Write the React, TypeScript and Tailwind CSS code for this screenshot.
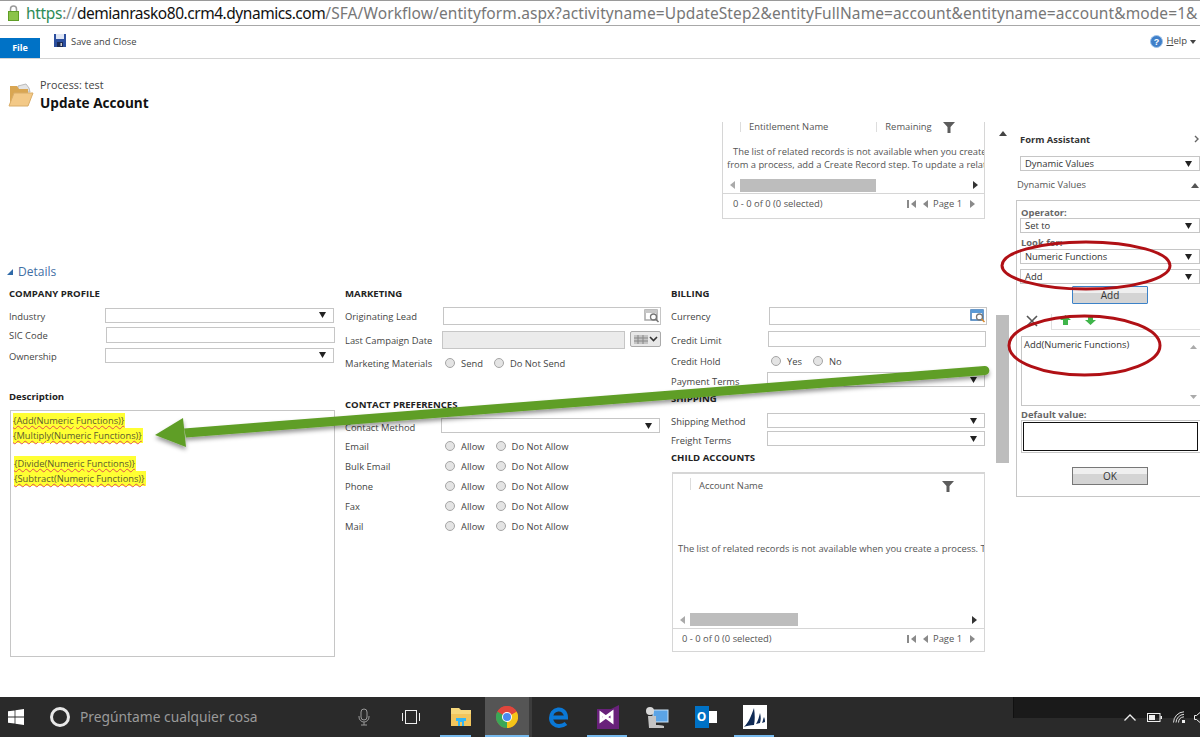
import type { ReactNode } from 'react'
import clsx from 'clsx'

const Caret = () => (
  <svg width="7" height="6" viewBox="0 0 7 6" className="shrink-0"><path d="M0 0h7L3.5 6z" fill="#222" /></svg>
)

const Select = ({ value, className }: { value?: string; className?: string }) => (
  <div className={clsx('flex items-center justify-between border border-[#c6c6c6] bg-white pl-[4px] pr-[7px] text-[#333]', className)}>
    <span className="mt-[2px]">{value}</span>
    <Caret />
  </div>
)

const Lookup = ({ accent }: { accent?: boolean }) => (
  <svg width="16" height="14" viewBox="0 0 16 14" className="shrink-0">
    <rect x="1" y="1" width="12" height="10" fill="#fff" stroke={accent ? '#3a78b8' : '#a8a8a8'} strokeWidth="1.5" />
    <rect x="1" y="1" width="12" height="3" fill={accent ? '#5a9ad6' : '#c8c8c8'} />
    <circle cx="9.5" cy="8" r="3" fill="none" stroke="#777" strokeWidth="1.3" />
    <path d="M11.5 10l3 3" stroke={accent ? '#d98a30' : '#777'} strokeWidth="1.6" />
  </svg>
)

const Radio = () => (
  <span className="block h-[10px] w-[10px] shrink-0 rounded-full border border-[#a5a5a5] bg-[#e4e4e4]" />
)

const RadioPair = ({ a, b, gap }: { a: string; b: string; gap: string }) => (
  <div className="flex items-center">
    <Radio />
    <span className={clsx('ml-[6px] pt-[2px] text-[#444]', gap)}>{a}</span>
    <Radio />
    <span className="ml-[6px] pt-[2px] text-[#444]">{b}</span>
  </div>
)

const Field = ({ label, labelClass, className, children }: { label: string; labelClass: string; className?: string; children?: ReactNode }) => (
  <div className={clsx('flex items-center', className)}>
    <span className={clsx('shrink-0 pt-[2px] whitespace-nowrap text-[#444]', labelClass)}>{label}</span>
    {children}
  </div>
)

const SectionTitle = ({ children, className }: { children: ReactNode; className?: string }) => (
  <div className={clsx('h-[14px] whitespace-nowrap text-[9.6px] leading-[16px] font-bold text-[#222]', className)}>{children}</div>
)

const Funnel = () => (
  <svg width="12" height="11" viewBox="0 0 12 11"><path d="M0 0h12L7.5 5v6h-3V5z" fill="#5c5c5c" /></svg>
)

const Tri = ({ dir }: { dir: 'l' | 'r' }) => (
  <svg width="5" height="8" viewBox="0 0 5 8"><path d={dir === 'l' ? 'M5 0v8L0 4z' : 'M0 0v8l5-4z'} fill={dir === 'l' ? '#aaa' : '#333'} /></svg>
)

const Pager = () => (
  <div className="flex items-center text-[#555]">
    <span className="mr-[2px] h-[8px] w-[2px] bg-[#8a8a8a]" />
    <svg width="5" height="8" viewBox="0 0 5 8" className="mr-[7px]"><path d="M5 0v8L0 4z" fill="#8a8a8a" /></svg>
    <svg width="5" height="8" viewBox="0 0 5 8" className="mr-[5px]"><path d="M5 0v8L0 4z" fill="#8a8a8a" /></svg>
    <span>Page 1</span>
    <svg width="5" height="8" viewBox="0 0 5 8" className="ml-[8px]"><path d="M0 0v8l5-4z" fill="#8a8a8a" /></svg>
  </div>
)

const Squiggle = ({ children }: { children: ReactNode }) => (
  <span className="underline decoration-[#e05050] decoration-wavy decoration-1">{children}</span>
)

const HighlightLine = ({ name, className }: { name: string; className?: string }) => (
  <div className={clsx('h-[15px] w-fit bg-[#ffff33] pr-[1px] text-[9.3px] leading-[15px] whitespace-nowrap text-[#5a5a30]', className)}>
    <Squiggle>{`{${name}(Numeric`}</Squiggle> <Squiggle>{'Functions)}'}</Squiggle>
  </div>
)

const Btn = ({ label, className }: { label: string; className?: string }) => (
  <div className={clsx('flex items-center justify-center bg-[linear-gradient(#efefef_0%,#efefef_40%,#d4d4d4_40%,#d4d4d4_100%)] text-[10px] text-[#333]', className)}>{label}</div>
)

const Windows = () => (
  <svg width="16" height="16" viewBox="0 0 16 16"><path d="M0 2.3l6.6-.9v6.2H0zM7.4 1.3L16 0v7.6H7.4zM0 8.4h6.6v6.2L0 13.7zM7.4 8.4H16V16l-8.6-1.2z" fill="#fff" /></svg>
)

const TaskSlot = ({ children, line, active }: { children: ReactNode; line?: string; active?: boolean }) => (
  <div className="relative flex h-full w-[49px] items-center justify-center">
    {active && <div className="absolute inset-y-0 left-0 w-[44px] bg-[#555]" />}
    {active && <div className="absolute inset-y-0 left-[44px] w-[3px] bg-[#3c3c3c]" />}
    <div className="relative">{children}</div>
    {line && <div className={clsx('absolute bottom-0 h-[2px] bg-[#76b9ed]', line)} />}
  </div>
)

export default function App() {
  return (
    <div className="relative h-[737px] w-[1200px] overflow-hidden bg-white font-['Open_Sans',sans-serif] text-[9.4px]">
      {/* address bar */}
      <div className="flex h-[26px] items-center overflow-hidden border-t border-b border-t-[#9a9a9a] border-b-[#a8a8a8] pl-[8px]">
        <svg width="11" height="16" viewBox="0 0 11 16" className="shrink-0">
          <path d="M2.5 7V4a3 3 0 0 1 6 0v3" fill="none" stroke="#9a9a9a" strokeWidth="1.5" />
          <rect x="0.5" y="6.5" width="10" height="9" fill="#8bc34a" stroke="#5f9e26" />
        </svg>
        <div className="ml-[7px] text-[15.5px] leading-[24px] whitespace-nowrap font-['Noto_Sans',sans-serif]">
          <span className="tracking-[-0.32px] text-[#2e8b57]">https</span>
          <span className="tracking-[-0.32px] text-[#888]">://</span>
          <span className="tracking-[-0.46px] text-[#111]">demianrasko80.crm4.dynamics.com</span>
          <span className="tracking-[0.1px] text-[#777]">/SFA/Workflow/entityform.aspx?activityname=UpdateStep2&amp;entityFullName=account&amp;entityname=account&amp;mode=1&amp;</span>
        </div>
      </div>

      {/* ribbon */}
      <div className="flex h-[33px] items-stretch border-b border-[#d4d4d4]">
        <div className="mt-[12px] flex w-[40px] items-center justify-center bg-[#0072c6] text-[9px] font-bold text-white">File</div>
        <div className="mt-[8px] ml-[14px] flex h-[13px] items-start">
          <svg width="12" height="13" viewBox="0 0 12 13">
            <rect width="12" height="13" fill="#2c4f9e" />
            <rect x="2" y="0" width="8" height="5" fill="#dfe6f4" />
            <rect x="3" y="8" width="6" height="5" fill="#1c2c55" />
            <rect x="6.5" y="9" width="1.5" height="3" fill="#ccc" />
          </svg>
          <span className="mt-[1px] ml-[5px] text-[9.4px] leading-[14px] whitespace-nowrap text-[#444]">Save and Close</span>
        </div>
        <div className="mt-[9px] mr-[4px] ml-auto flex h-[13px] items-center">
          <svg width="13" height="13" viewBox="0 0 13 13">
            <circle cx="6.5" cy="6.5" r="6" fill="#3f7fc9" stroke="#9cc2ea" />
            <text x="6.5" y="10" textAnchor="middle" fontSize="9" fontWeight="700" fill="#fff" fontFamily="Liberation Sans">?</text>
          </svg>
          <span className="ml-[3px] text-[9.5px] text-[#444]"><span className="underline">H</span>elp</span>
          <svg width="6" height="4" viewBox="0 0 6 4" className="ml-[3px]"><path d="M0 0h6L3 4z" fill="#444" /></svg>
        </div>
      </div>

      <div className="flex h-[638px]">
        {/* form area */}
        <div className="w-[996px] shrink-0">
          <div className="flex h-[63px] pt-[24px] pl-[8px]">
            <svg width="26" height="25" viewBox="0 0 26 25" className="shrink-0">
              <path d="M10 3l8-2 3 4 1 4H10z" fill="#e4e4e4" stroke="#bbb" />
              <path d="M2 3h7l2 3h9v16H2z" fill="#d9a652" />
              <path d="M6 10h19l-5 13H1z" fill="#f3c987" stroke="#d9ad68" />
            </svg>
            <div className="-mt-[7px] ml-[6px]">
              <div className="h-[17px] text-[10.8px] leading-[17px] text-[#444]">Process: test</div>
              <div className="h-[19px] text-[13.6px] leading-[19px] font-bold whitespace-nowrap text-[#111]">Update Account</div>
            </div>
          </div>

          <div className="ml-[722px] flex h-[97px] w-[263px] flex-col overflow-hidden border-x border-b border-[#d6d6d6]">
            <div className="relative flex h-[11px] items-end text-[#555]">
              <div className="absolute top-0 left-[17px] h-[10px] w-px bg-[#ddd]" />
              <span className="ml-[26px] leading-[12px] whitespace-nowrap">Entitlement Name</span>
              <div className="absolute top-0 left-[153px] h-[10px] w-px bg-[#ddd]" />
              <span className="ml-[57px] leading-[12px]">Remaining</span>
              <div className="ml-[11px]"><Funnel /></div>
            </div>
            <div className="mt-[12px] h-[13px] pl-[10px] leading-[13px] whitespace-nowrap text-[#555]">The list of related records is not available when you create a process.</div>
            <div className="h-[13px] pl-[4px] leading-[13px] whitespace-nowrap text-[#555]">from a process, add a Create Record step. To update a related record</div>
            <div className="mt-[7px] flex h-[14px] items-center">
              <div className="ml-[7px]"><Tri dir="l" /></div>
              <div className="ml-[5px] h-[13px] w-[136px] bg-[#bdbdbd]" />
              <div className="mr-[6px] ml-auto"><Tri dir="r" /></div>
            </div>
            <div className="mt-px flex flex-1 items-center justify-between border-t border-[#d6d6d6] pr-[9px] pb-[4px] pl-[10px] text-[#555]">
              <span>0 - 0 of 0 (0 selected)</span>
              <Pager />
            </div>
          </div>

          <div className="flex h-[67px] items-end pb-[6px] pl-[7px]">
            <svg width="6" height="6" viewBox="0 0 6 6" className="mb-[5px]"><path d="M6 0v6H0z" fill="#2f6aa8" /></svg>
            <span className="ml-[5px] text-[12px] leading-[16px] text-[#3f6fa5]">Details</span>
          </div>

          <div className="flex gap-[10px] pl-[9px]">
            {/* company profile */}
            <div className="w-[326px] shrink-0">
              <SectionTitle>COMPANY PROFILE</SectionTitle>
              <Field label="Industry" labelClass="mt-[2px] w-[96px]" className="mt-[7px] h-[16px]"><Select className="h-[15px] w-[229px]" /></Field>
              <Field label="SIC Code" labelClass="mt-[2px] w-[97px]" className="mt-[3px] h-[17px]"><div className="h-[16px] w-[229px] border border-[#c6c6c6]" /></Field>
              <Field label="Ownership" labelClass="mt-[2px] w-[96px]" className="mt-[4px] h-[16px]"><Select className="h-[15px] w-[229px]" /></Field>
              <SectionTitle className="mt-[26px]">Description</SectionTitle>
              <div className="mt-[7px] ml-px h-[247px] w-[325px] border border-[#c6c6c6] pt-[2px] pl-[2px]">
                <HighlightLine name="Add" />
                <HighlightLine name="Multiply" />
                <div className="h-[13px]" />
                <HighlightLine name="Divide" className="ml-px" />
                <HighlightLine name="Subtract" className="ml-px" />
              </div>
            </div>

            {/* marketing + contact */}
            <div className="w-[316px] shrink-0">
              <SectionTitle>MARKETING</SectionTitle>
              <Field label="Originating Lead" labelClass="w-[98px]" className="mt-[7px] h-[18px]">
                <div className="flex h-[18px] w-[218px] items-center justify-end border border-[#c6c6c6]"><Lookup /></div>
              </Field>
              <Field label="Last Campaign Date" labelClass="w-[97px]" className="mt-[6px] h-[18px]">
                <div className="h-[18px] w-[183px] border border-[#c6c6c6] bg-[#ebebeb]" />
                <div className="ml-[5px] flex h-[16px] w-[31px] items-center justify-center self-start rounded-[2px] border border-[#aaa] bg-[#e8e8e8]">
                  <svg width="14" height="9" viewBox="0 0 14 9"><rect width="14" height="9" fill="#c4c4c4" /><path d="M0 3h14M0 6h14M4 0v9M9 0v9" stroke="#888" /></svg>
                  <svg width="9" height="6" viewBox="0 0 9 6" className="ml-px"><path d="M1 1l3.5 3.5L8 1" fill="none" stroke="#333" strokeWidth="1.6" /></svg>
                </div>
              </Field>
              <Field label="Marketing Materials" labelClass="w-[100px]" className="mt-[6px] h-[16px]">
                <RadioPair a="Send" b="Do Not Send" gap="mr-[11px]" />
              </Field>
              <SectionTitle className="mt-[26px]">CONTACT PREFERENCES</SectionTitle>
              <Field label="Contact Method" labelClass="mt-[3px] w-[96px]" className="mt-[7px] h-[15px]"><Select className="h-[15px] w-[219px]" /></Field>
              {['Email', 'Bulk Email', 'Phone', 'Fax', 'Mail'].map((name, i) => (
                <Field key={name} label={name} labelClass="w-[100px]" className={i === 0 ? 'mt-[5px] h-[16px]' : 'mt-[4px] h-[16px]'}>
                  <RadioPair a="Allow" b="Do Not Allow" gap="mr-[11px]" />
                </Field>
              ))}
            </div>

            {/* billing + shipping + child accounts */}
            <div className="w-[316px] shrink-0">
              <SectionTitle>BILLING</SectionTitle>
              <Field label="Currency" labelClass="w-[98px]" className="mt-[7px] h-[18px]">
                <div className="flex h-[18px] w-[218px] items-center justify-end border border-[#c6c6c6]"><Lookup accent /></div>
              </Field>
              <Field label="Credit Limit" labelClass="mt-[2px] w-[97px]" className="mt-[6px] h-[16px]"><div className="h-[16px] w-[218px] border border-[#c6c6c6]" /></Field>
              <Field label="Credit Hold" labelClass="w-[100px]" className="mt-[6px] h-[16px]">
                <RadioPair a="Yes" b="No" gap="mr-[11px]" />
              </Field>
              <Field label="Payment Terms" labelClass="mt-[3px] w-[96px]" className="mt-[3px] h-[15px]"><Select className="h-[15px] w-[218px]" /></Field>
              <SectionTitle className="mt-[4px]">SHIPPING</SectionTitle>
              <Field label="Shipping Method" labelClass="mt-[2px] w-[96px]" className="mt-[8px] h-[15px]"><Select className="h-[15px] w-[218px]" /></Field>
              <Field label="Freight Terms" labelClass="mt-[3px] w-[96px]" className="mt-[3px] h-[15px]"><Select className="h-[15px] w-[218px]" /></Field>
              <SectionTitle className="mt-[4px]">CHILD ACCOUNTS</SectionTitle>
              <div className="mt-[8px] ml-px flex h-[180px] w-[313px] flex-col overflow-hidden border border-[#d6d6d6]">
                <div className="relative flex h-[25px] items-center border-t border-[#d6d6d6] text-[#555]">
                  <div className="absolute top-[4px] left-[17px] h-[12px] w-px bg-[#ddd]" />
                  <span className="ml-[26px]">Account Name</span>
                  <div className="mr-[30px] ml-auto"><Funnel /></div>
                </div>
                <div className="flex flex-1 items-center pb-[12px] pl-[5px] whitespace-nowrap text-[#555]">The list of related records is not available when you create a process. To add</div>
                <div className="flex h-[15px] items-center">
                  <div className="ml-[7px]"><Tri dir="l" /></div>
                  <div className="ml-[5px] h-[13px] w-[108px] bg-[#bdbdbd]" />
                  <div className="mr-[7px] ml-auto"><Tri dir="r" /></div>
                </div>
                <div className="mt-px flex h-[23px] items-center justify-between border-t border-[#d6d6d6] pr-[9px] pb-[2px] pl-[9px] text-[#555]">
                  <span>0 - 0 of 0 (0 selected)</span>
                  <Pager />
                </div>
              </div>
            </div>
          </div>
        </div>

        {/* form scrollbar */}
        <div className="w-[13px] shrink-0 pt-[72px]">
          <svg width="8" height="5" viewBox="0 0 8 5" className="ml-[3px] block"><path d="M0 5h8L4 0z" fill="#444" /></svg>
          <div className="mt-[179px] h-[148px] w-[13px] bg-[#bdbdbd]" />
        </div>

        {/* form assistant */}
        <div className="min-w-0 flex-1 pt-[73px] text-[#333]">
          <div className="flex h-[14px] items-center justify-between pr-[1px] pl-[11px]">
            <span className="pt-[2px] leading-[14px] font-bold whitespace-nowrap">Form Assistant</span>
            <svg width="5" height="8" viewBox="0 0 5 8"><path d="M1 1l3 3-3 3" fill="none" stroke="#666" strokeWidth="1.4" /></svg>
          </div>
          <Select value="Dynamic Values" className="mt-[10px] ml-[11px] h-[15px] w-[180px]" />
          <div className="mt-[7px] flex h-[14px] items-center justify-between pr-[1px] pl-[8px]">
            <span className="whitespace-nowrap text-[#555]">Dynamic Values</span>
            <svg width="8" height="5" viewBox="0 0 8 5"><path d="M0 5h8L4 0z" fill="#555" /></svg>
          </div>
          <div className="mt-[8px] ml-[7px] h-[297px] border-y border-l border-[#c6c6c6]">
            <div className="mt-[5px] ml-[4px] h-[12px] leading-[13px] font-bold text-[#666]">Operator:</div>
            <Select value="Set to" className="ml-[3px] h-[15px] w-[180px]" />
            <div className="mt-[4px] ml-[4px] h-[12px] leading-[12px] font-bold text-[#666]">Look for:</div>
            <Select value="Numeric Functions" className="ml-[3px] h-[15px] w-[180px]" />
            <Select value="Add" className="mt-[5px] ml-[3px] h-[15px] w-[180px]" />
            <Btn label="Add" className="mt-[2px] ml-[55px] h-[18px] w-[76px] rounded-[1px] border border-[#3c82c8]" />
            <div className="flex h-[26px] items-end pl-[9px]">
              <svg width="12" height="12" viewBox="0 0 12 12" className="mb-[3px]"><path d="M1 1l10 10M11 1L1 11" stroke="#555" strokeWidth="1.6" /></svg>
              <div className="ml-[13px] flex h-[16px] flex-1 items-center border-b border-l border-[#e0e0e0] pb-[3px]">
                <svg width="11" height="10" viewBox="0 0 11 10" className="ml-[8px]"><path d="M5.500 0L11 5H8v5H3V5H0z" fill="#3fb54a" /></svg>
                <svg width="11" height="10" viewBox="0 0 11 10" className="ml-[14px]"><path d="M5.500 10L11 5H8V0H3v5H0z" fill="#3fb54a" /></svg>
              </div>
            </div>
            <div className="mt-[6px] ml-[4px] flex h-[70px] justify-between border border-r-0 border-[#c6c6c6] pt-[1px] pr-[3px] pl-[2px] text-[#333]">
              <span className="leading-[14px] whitespace-nowrap">Add(Numeric Functions)</span>
              <div className="flex h-full flex-col justify-between pt-[7px] pb-[6px]">
                <svg width="7" height="4" viewBox="0 0 7 4"><path d="M0 4h7L3.500 0z" fill="#aaa" /></svg>
                <svg width="7" height="4" viewBox="0 0 7 4"><path d="M0 0h7L3.500 4z" fill="#aaa" /></svg>
              </div>
            </div>
            <div className="mt-[2px] ml-[4px] h-[12px] leading-[13px] font-bold text-[#666]">Default value:</div>
            <div className="ml-[4px] h-[33px] border border-r-0 border-[#c6c6c6] p-px pr-[2px]">
              <div className="h-full border border-[#111]" />
            </div>
            <Btn label="OK" className="mt-[14px] ml-[55px] h-[18px] w-[76px] border border-[#777]" />
          </div>
        </div>
      </div>

      {/* taskbar */}
      <div className="relative flex h-[40px] items-center bg-[#2a2a2a]">
        <div className="absolute top-0 right-0 h-[21px] w-[187px] border-l border-[#111] bg-[#1a1a1a]" />
        <div className="ml-[8px]"><Windows /></div>
        <div className="ml-[26px] h-[20px] w-[20px] rounded-full border-[3px] border-[#e8e8e8]" />
        <span className="ml-[10px] w-[180px] text-[13.8px] whitespace-nowrap text-[#9a9a9a] font-['Noto_Sans',sans-serif]">Pregúntame cualquier cosa</span>
        <svg width="12" height="18" viewBox="0 0 12 18" className="ml-[98px]">
          <rect x="3" y="1" width="6" height="11" rx="3" fill="none" stroke="#999" />
          <path d="M1 8v1a5 5 0 0 0 10 0V8M6 14v3M3 17h6" fill="none" stroke="#999" />
        </svg>
        <svg width="18" height="14" viewBox="0 0 18 14" className="ml-[32px]">
          <rect x="3.500" y="0.500" width="11" height="13" fill="none" stroke="#eee" />
          <path d="M0.500 3v8M17.500 3v8" stroke="#eee" />
        </svg>
        <div className="ml-[16px] flex h-full">
          <TaskSlot line="left-[4px] w-[31px]">
            <svg width="22" height="20" viewBox="0 0 22 20">
              <path d="M1 1h8l2 2h10v16H1z" fill="#f7d87c" />
              <path d="M1 7h20v12H1z" fill="#f2c55c" />
              <path d="M8 12h6v7h-2v-4h-2v4H8z" fill="#35b6f2" />
              <path d="M6 11h10v3H6z" fill="#35b6f2" />
            </svg>
          </TaskSlot>
          <TaskSlot active line="left-0 w-[44px]">
            <svg width="22" height="22" viewBox="0 0 22 22" className="mr-[5px]">
              <circle cx="11" cy="11" r="11" fill="#e0463c" />
              <path d="M11 11L1.470 5.500A11 11 0 0 0 11 22z" fill="#3aa757" />
              <path d="M11 11V22A11 11 0 0 0 20.530 5.500z" fill="#f5c518" />
              <path d="M11 11L1.470 5.500A11 11 0 0 1 20.530 5.500z" fill="#e0463c" />
              <circle cx="11" cy="11" r="5" fill="#fff" />
              <circle cx="11" cy="11" r="4" fill="#4a8af0" />
            </svg>
          </TaskSlot>
          <TaskSlot>
            <svg width="20" height="21" viewBox="0 0 20 21">
              <path d="M2 10.500H17C17 5 13 2 9 2.500 4.500 3 2 7 2 11c0 5 4 8 8 8 3 0 5-.8 7-2.500" fill="none" stroke="#0a78d7" strokeWidth="4" />
            </svg>
          </TaskSlot>
          <TaskSlot line="left-[4px] w-[40px]">
            <svg width="22" height="24" viewBox="0 0 22 24">
              <path d="M0 4h14l8-4v24H0z" fill="#68217a" />
              <path d="M4 8.500l11 8V7.500L4 15.500z" fill="none" stroke="#fff" strokeWidth="3" />
            </svg>
          </TaskSlot>
          <TaskSlot>
            <svg width="24" height="22" viewBox="0 0 24 22">
              <rect x="8" y="4" width="15" height="12" fill="#5ba4e6" stroke="#cfe3f5" />
              <circle cx="5" cy="5" r="4" fill="#d8d8d8" />
              <path d="M3 10h8v9c3 0 6 0 8 1v2H4z" fill="#c4c4c4" />
            </svg>
          </TaskSlot>
          <TaskSlot>
            <div className="relative flex h-[22px] w-[22px] items-center">
              <div className="flex h-[22px] w-[14px] items-center justify-center bg-[#0072c6] text-[12px] font-bold text-white">O</div>
              <div className="h-[12px] w-[8px] bg-white" />
            </div>
          </TaskSlot>
          <TaskSlot line="left-[4px] w-[40px]">
            <svg width="24" height="24" viewBox="0 0 24 24">
              <rect width="24" height="24" fill="#fff" />
              <path d="M1 22C6 17 8 11 11 3c1 7 1 12 0 17-4 0-8 1-10 2z" fill="#0f2a55" />
              <path d="M13 19c2-3 3-7 4-11 1 4 1 7 0 10z" fill="#0f2a55" />
              <path d="M19 18c1-2 1-4 2-6 1 2 1 4 1 5z" fill="#0f2a55" />
            </svg>
          </TaskSlot>
        </div>
        <div className="relative ml-auto flex items-center">
          <svg width="12" height="7" viewBox="0 0 12 7"><path d="M0.500 6.500L6 1l5.500 5.500" fill="none" stroke="#eee" strokeWidth="1.300" /></svg>
          <svg width="15" height="9" viewBox="0 0 15 9" className="ml-[11px]">
            <rect x="0.500" y="0.500" width="12.500" height="8" fill="none" stroke="#eee" />
            <rect x="2" y="2" width="6" height="5" fill="#eee" />
            <rect x="13.500" y="3" width="1.500" height="3" fill="#eee" />
          </svg>
          <svg width="12" height="12" viewBox="0 0 12 12" className="ml-[11px]">
            <path d="M0.500 11.500A11 11 0 0 1 11 0.800M3 11.500A8.500 8.500 0 0 1 11 3.300M5.500 11.500A6 6 0 0 1 11 5.800" fill="none" stroke="#ddd" />
            <rect x="9" y="9" width="3" height="3" fill="#eee" />
          </svg>
          <svg width="6" height="11" viewBox="0 0 6 11" className="ml-[9px]"><path d="M6 0.500L2.500 3.500H0.500v4h2L6 10.500" fill="none" stroke="#eee" /></svg>
        </div>
      </div>

      {/* annotations drawn on top of the screenshot */}
      <svg width="1200" height="737" viewBox="0 0 1200 737" className="pointer-events-none absolute inset-0">
        <defs>
          <filter id="arrowShadow" x="-5%" y="-30%" width="110%" height="170%">
            <feDropShadow dx="0" dy="3" stdDeviation="2" floodColor="#000" floodOpacity="0.4" />
          </filter>
        </defs>
        <g filter="url(#arrowShadow)" fill="#5f9e26">
          <path d="M184 428.500L984.500 366a4.500 4.500 0 0 1 .7 9L186 437.500z" />
          <path d="M155 435L183 418L186 447z" />
        </g>
        <ellipse cx="1086" cy="265.500" rx="84" ry="23.500" fill="none" stroke="#b01015" strokeWidth="3" />
        <ellipse cx="1084.500" cy="345.500" rx="75.500" ry="29.500" fill="none" stroke="#b01015" strokeWidth="3" />
      </svg>
    </div>
  )
}
